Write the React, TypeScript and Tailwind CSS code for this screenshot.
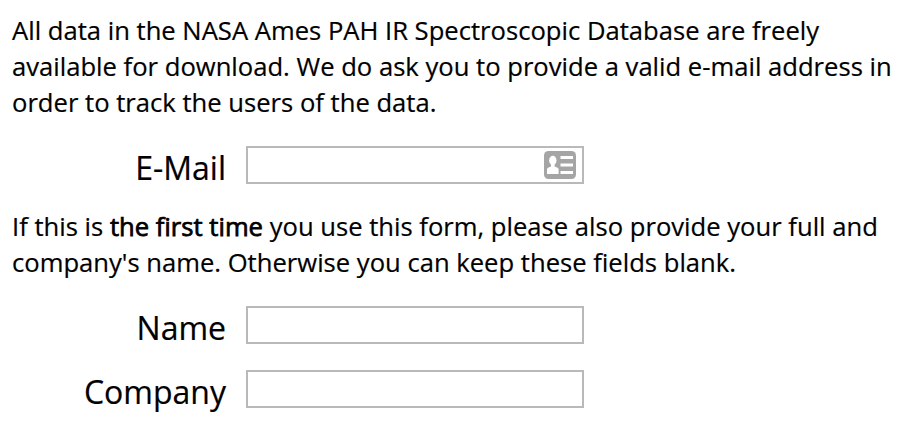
import type { ReactNode } from 'react';

function ContactCardIcon() {
  return (
    <svg className="h-7 w-8" viewBox="0 0 32 28" aria-hidden="true">
      <rect width="32" height="28" rx="4.5" fill="#a5a5a5" />
      <ellipse cx="8.8" cy="9.5" rx="3.7" ry="4.7" fill="white" />
      <path d="M7 12h3.6v3.5l3 1.2q1 .5 1 1.8V23H3v-4.5q0-1.3 1-1.8l3-1.2z" fill="white" />
      <path d="M16.5 6.5H29M16.5 14H29M16.5 21.5H29" stroke="white" strokeWidth="3" />
    </svg>
  );
}

function Field({ id, label, children }: { id: string; label: string; children?: ReactNode }) {
  return (
    <div className="flex h-[38px] items-center">
      <label htmlFor={id} className="w-[226px] pt-1.5 text-right text-[32px] leading-[38px]">
        {label}
      </label>
      <div className="ml-5 flex h-[38px] w-[338px] items-center border-2 border-[#b9b9b9] pr-1.5">
        <input id={id} className="h-full min-w-0 flex-1 px-2 text-2xl outline-none" />
        {children}
      </div>
    </div>
  );
}

export default function App() {
  return (
    <main className="h-[426px] w-[912px] overflow-hidden bg-white pt-[13px] font-['Open_Sans',sans-serif] text-black [-webkit-text-stroke:0.2px_black]">
      <p className="pl-3 text-[25.62px] leading-9 whitespace-nowrap">
        All data in the NASA Ames PAH IR Spectroscopic Database are freely
        <br />
        available for download. We do ask you to provide a valid e-mail address in
        <br />
        order to track the users of the data.
      </p>
      <form className="mt-[25px]">
        <Field id="email" label="E-Mail">
          <ContactCardIcon />
        </Field>
        <p className="my-[25px] pl-3 text-[25.62px] leading-9 whitespace-nowrap">
          If this is <span className="[-webkit-text-stroke:0.75px_black]">the first time</span> you use this form, please also provide your full and
          <br />
          company's name. Otherwise you can keep these fields blank.
        </p>
        <div className="space-y-[26px]">
          <Field id="name" label="Name" />
          <Field id="company" label="Company" />
        </div>
      </form>
    </main>
  );
}
